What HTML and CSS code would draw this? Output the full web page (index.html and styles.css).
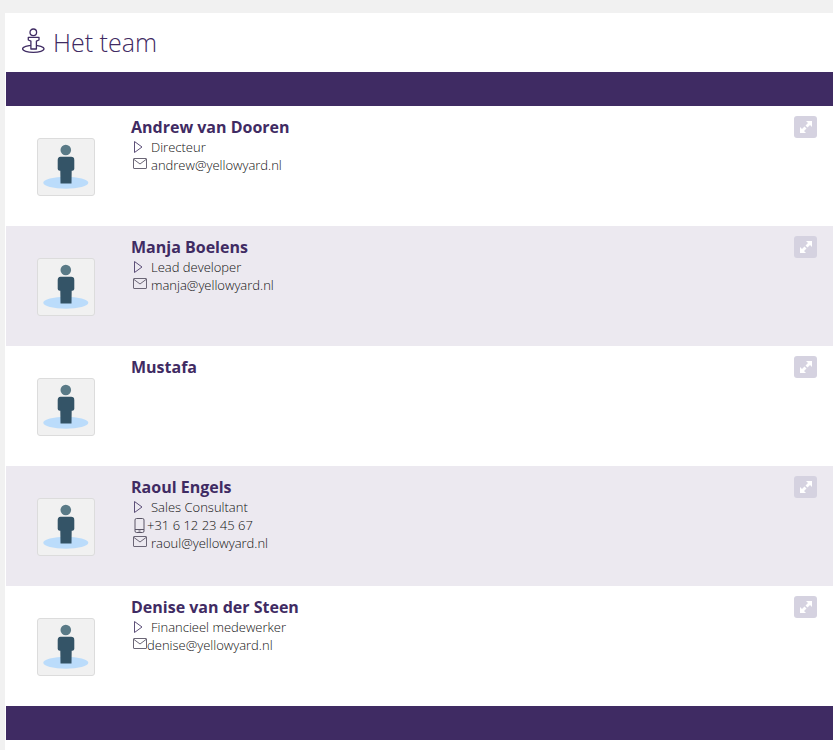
FILE: index.html
```html
<!DOCTYPE html>
<html lang="nl">
<head>
<meta charset="utf-8">
<title>Het team</title>
<link rel="stylesheet" href="styles.css">
</head>
<body>
<svg class="defs" width="0" height="0" aria-hidden="true">
  <symbol id="person" viewBox="0 0 56 56">
    <ellipse cx="27.800" cy="43.700" rx="22.500" ry="6" fill="#bbdcfb"/>
    <circle cx="27.800" cy="11" r="5.300" fill="#5a7a87"/>
    <path d="M22.500 17.700h10.600a3.200 3.200 0 0 1 3.200 3.200V30a2 2 0 0 1-2 1.700h-.6l-.2 12.800H22.500l-.2-12.800h-.6a2 2 0 0 1-2-1.700v-9.100a3.200 3.200 0 0 1 2.800-3.200z" fill="#345467"/>
  </symbol>
  <symbol id="play" viewBox="0 0 14 14">
    <path d="M2.500 1.500 10 7 2.500 12.500z" fill="none" stroke="#5c4f78" stroke-width="1" stroke-linejoin="round"/>
  </symbol>
  <symbol id="mail" viewBox="0 0 14 12">
    <rect x=".5" y=".5" width="13" height="10" rx=".5" fill="none" stroke="#6b6676"/>
    <path d="M1 1.500l6 4.500 6-4.500" fill="none" stroke="#6b6676"/>
  </symbol>
  <symbol id="phone" viewBox="0 0 11 15">
    <rect x="1" y=".5" width="9" height="14" rx="1.500" fill="none" stroke="#5a5566"/>
    <path d="M1 11.500h9" stroke="#5a5566"/>
    <path d="M4.500 13h2" stroke="#5a5566"/>
  </symbol>
  <symbol id="expand" viewBox="0 0 12 12">
    <path d="M6 0h6v6l-2-2-2.500 2.500-2-2L8 2zM6 12H0V6l2 2 2.500-2.500 2 2L4 10z" fill="#fff"/>
  </symbol>
</svg>
<main class="panel">
  <header class="title">
    <svg class="title-icon" viewBox="0 0 26 26" aria-hidden="true">
      <circle cx="12.300" cy="4.300" r="3.300" fill="none" stroke="#3f2b63" stroke-width="1.300"/>
      <ellipse cx="12.300" cy="20.800" rx="10.700" ry="3.500" fill="none" stroke="#3f2b63" stroke-width="1.300"/>
      <path d="M7.300 9.300h10.700v2.700l-2.600 1.200V21H9.900v-7.800L7.300 12z" fill="#fff" stroke="#3f2b63" stroke-width="1.300" stroke-linejoin="round"/>
    </svg>
    <h1>Het team</h1>
  </header>
  <div class="bar"></div>
  <article class="row">
    <div class="avatar"><svg><use href="#person"/></svg></div>
    <div class="info">
      <h2>Andrew van Dooren</h2>
      <p class="line"><svg class="i-play"><use href="#play"/></svg>Directeur</p>
      <p class="line"><svg class="i-mail"><use href="#mail"/></svg>andrew@yellowyard.nl</p>
    </div>
    <button class="expand" aria-label="Uitklappen"><svg><use href="#expand"/></svg></button>
  </article>
  <article class="row alt">
    <div class="avatar"><svg><use href="#person"/></svg></div>
    <div class="info">
      <h2>Manja Boelens</h2>
      <p class="line"><svg class="i-play"><use href="#play"/></svg>Lead developer</p>
      <p class="line"><svg class="i-mail"><use href="#mail"/></svg>manja@yellowyard.nl</p>
    </div>
    <button class="expand" aria-label="Uitklappen"><svg><use href="#expand"/></svg></button>
  </article>
  <article class="row">
    <div class="avatar"><svg><use href="#person"/></svg></div>
    <div class="info">
      <h2>Mustafa</h2>
    </div>
    <button class="expand" aria-label="Uitklappen"><svg><use href="#expand"/></svg></button>
  </article>
  <article class="row alt">
    <div class="avatar"><svg><use href="#person"/></svg></div>
    <div class="info">
      <h2>Raoul Engels</h2>
      <p class="line"><svg class="i-play"><use href="#play"/></svg>Sales Consultant</p>
      <p class="line"><svg class="i-phone"><use href="#phone"/></svg>+31 6 12 23 45 67</p>
      <p class="line"><svg class="i-mail"><use href="#mail"/></svg>raoul@yellowyard.nl</p>
    </div>
    <button class="expand" aria-label="Uitklappen"><svg><use href="#expand"/></svg></button>
  </article>
  <article class="row">
    <div class="avatar"><svg><use href="#person"/></svg></div>
    <div class="info">
      <h2>Denise van der Steen</h2>
      <p class="line"><svg class="i-play"><use href="#play"/></svg>Financieel medewerker</p>
      <p class="line"><svg class="i-mail tight"><use href="#mail"/></svg>denise@yellowyard.nl</p>
    </div>
    <button class="expand" aria-label="Uitklappen"><svg><use href="#expand"/></svg></button>
  </article>
  <div class="bar"></div>
</main>
</body>
</html>
```
FILE: styles.css
```css
html, body {
  margin: 0;
  height: 750px;
  overflow: hidden;
}
body {
  background: #f1f1f1;
  font-family: "Open Sans", sans-serif;
  color: #3f2b63;
  padding: 13px 0 0 5px;
  box-sizing: border-box;
}
.defs {
  position: absolute;
}
.panel {
  background: #fff;
  padding-left: 1px;
  height: 737px;
}
.title {
  height: 59px;
  display: flex;
  align-items: center;
  padding: 0 0 2px 15px;
  gap: 6px;
  box-sizing: border-box;
}
.title-icon {
  width: 26px;
  height: 26px;
  flex: none;
  margin-top: -1px;
}
.title h1 {
  margin: 0;
  font-size: 25px;
  font-weight: 300;
  line-height: 32px;
  color: #3f2b63;
}
.bar {
  height: 34px;
  background: #3f2b63;
}
.row {
  height: 120px;
  display: flex;
  background: #fff;
  padding: 0 16px 0 31px;
  box-sizing: border-box;
}
.row.alt {
  background: #ece9f0;
}
.avatar {
  width: 58px;
  height: 58px;
  margin-top: 32px;
  flex: none;
  background: #f1f1f1;
  border: 1px solid #dcdcdc;
  border-radius: 3px;
  box-sizing: border-box;
  overflow: hidden;
}
.avatar svg {
  display: block;
  width: 56px;
  height: 56px;
}
.info {
  flex: 1;
  margin-left: 36px;
  padding-top: 10px;
}
.info h2 {
  margin: 0;
  font-size: 16px;
  font-weight: 700;
  line-height: 22px;
  color: #3f2b63;
}
.line {
  margin: 0;
  display: flex;
  align-items: center;
  font-size: 13px;
  font-weight: 300;
  line-height: 18px;
  color: #111;
}
.line svg {
  flex: none;
}
.i-play {
  width: 14px;
  height: 14px;
  margin: -1px 5px 0 1px;
}
.i-mail {
  width: 14px;
  height: 12px;
  margin: -2px 4px 0 2px;
}
.i-mail.tight {
  margin-right: 0;
}
.i-phone {
  width: 11px;
  height: 15px;
  margin: 0 2px 0 3px;
}
.expand {
  width: 23px;
  height: 22px;
  margin-top: 10px;
  padding: 0;
  flex: none;
  border: 0;
  border-radius: 3px;
  background: #d5d2e0;
  display: flex;
  align-items: center;
  justify-content: center;
}
.expand svg {
  width: 12px;
  height: 12px;
}
```
